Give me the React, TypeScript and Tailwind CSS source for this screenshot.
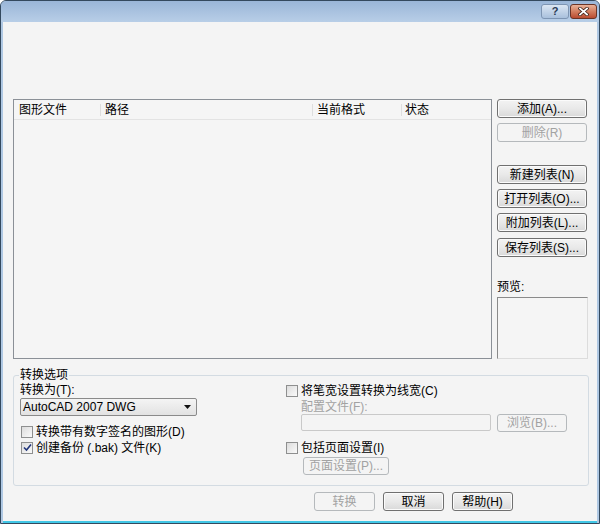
import React from 'react'

const font = { fontFamily: '"Liberation Sans", "Noto Sans CJK SC", sans-serif' }

function Btn({ label, disabled, className = '' }: { label: string; disabled?: boolean; className?: string }) {
  return (
    <div
      className={
        'flex items-center justify-center rounded-[3px] border text-[12px] leading-none ' +
        (disabled
          ? 'border-[#b5b9bc] bg-[#f4f4f4] text-[#a2a2a2] '
          : 'border-[#707070] bg-gradient-to-b from-[#f3f3f3] via-[#e9e9e9] to-[#d9d9d9] text-black shadow-[inset_0_0_0_1px_#fbfbfb] ') +
        className
      }
    >
      {label}
    </div>
  )
}

function Check({ checked, label, className = '' }: { checked?: boolean; label: string; className?: string }) {
  return (
    <div className={'flex h-[15px] items-center gap-[3px] text-[12px] leading-none ' + className}>
      <div className="flex h-[12px] w-[12px] items-center justify-center border border-[#8e8f8f] bg-gradient-to-br from-[#dcdcdc] to-[#fafafa]">
        {checked && (
          <svg width="9" height="9" viewBox="0 0 9 9">
            <path d="M1 4.5 L3.5 7 L8 1.5" fill="none" stroke="#21357a" strokeWidth="1.6" />
          </svg>
        )}
      </div>
      <span>{label}</span>
    </div>
  )
}

export default function App() {
  return (
    <div style={font} className="flex h-[524px] w-[600px] flex-col overflow-hidden rounded-t-[6px] border border-[#34495e] bg-[#afc8e3]">
      {/* title bar */}
      <div className="flex h-[21px] items-start justify-end bg-gradient-to-b from-[#9ab6d8] to-[#b8cee7] pr-[2px] pt-[3px]">
        <div className="flex h-[15px] w-[28px] items-center justify-center rounded-[3px] border border-[#7e95b3] bg-gradient-to-b from-[#dbe6f3] to-[#a9c0dc]">
          <span className="text-[11px] font-bold leading-none text-[#2a3a55]">?</span>
        </div>
        <div className="ml-[1px] flex h-[15px] w-[27px] items-center justify-center rounded-[3px] border border-[#6a3426] bg-gradient-to-b from-[#e9b299] via-[#d27d5f] to-[#b94b30]">
          <svg width="11" height="9" viewBox="0 0 11 9">
            <path d="M2 1.5 L9 7.5 M9 1.5 L2 7.5" stroke="#3c2018" strokeWidth="3.4" strokeLinecap="square" />
            <path d="M2 1.5 L9 7.5 M9 1.5 L2 7.5" stroke="#ffffff" strokeWidth="1.8" strokeLinecap="square" />
          </svg>
        </div>
      </div>

      {/* body */}
      <div className="mx-[2px] flex flex-1 flex-col border-b-[2px] border-[#41c7e6] bg-[#f4f4f4] pl-[10px] pt-[77px] text-black">
        <div className="flex">
          {/* file list */}
          <div className="h-[260px] w-[479px] border border-[#8b9097] bg-[#f5f5f5]">
            <div className="flex h-[20px] items-center border-b border-[#e3e3e3] text-[12px] leading-none">
              <div className="w-[87px] border-r border-[#dedede] pl-[5px]">图形文件</div>
              <div className="w-[212px] border-r border-[#dedede] pl-[4px]">路径</div>
              <div className="w-[89px] border-r border-[#dedede] pl-[4px]">当前格式</div>
              <div className="pl-[3px]">状态</div>
            </div>
          </div>

          {/* right column */}
          <div className="ml-[5px] flex w-[90px] flex-col">
            <Btn label="添加(A)..." className="h-[19px]" />
            <Btn label="删除(R)" disabled className="mt-[5px] h-[19px]" />
            <Btn label="新建列表(N)" className="mt-[23px] h-[19px]" />
            <Btn label="打开列表(O)..." className="mt-[5px] h-[19px]" />
            <Btn label="附加列表(L)..." className="mt-[5px] h-[19px]" />
            <Btn label="保存列表(S)..." className="mt-[6px] h-[19px]" />
            <div className="mt-[24px] h-[13px] text-[12px] leading-[13px]">预览:</div>
            <div className="mt-[3px] h-[62px] w-[91px] border border-b-[#dcdcdc] border-l-[#8a8a8a] border-r-[#dcdcdc] border-t-[#8a8a8a] bg-[#f5f5f5]" />
          </div>
        </div>

        {/* options group */}
        <fieldset className="mt-[9px] h-[118px] w-[576px] rounded-[3px] border border-[#d3dbe2]">
          <legend className="ml-[5px] px-[1px] text-[12px] leading-[14px]">转换选项</legend>
          <div className="flex">
            <div className="flex w-[272px] flex-col pl-[6px]">
              <div className="mt-[1px] h-[14px] text-[12px] leading-[14px]">转换为(T):</div>
              <div className="mt-[1px] flex h-[18px] w-[177px] items-center justify-between rounded-[2px] border border-[#8a8a8a] bg-gradient-to-b from-[#f4f4f4] to-[#e2e2e2] pl-[2px] pr-[5px] text-[12px] leading-none">
                <span>AutoCAD 2007 DWG</span>
                <svg width="7" height="4" viewBox="0 0 7 4">
                  <path d="M0 0 H7 L3.5 4 Z" fill="#111" />
                </svg>
              </div>
              <Check label="转换带有数字签名的图形(D)" className="mt-[8px] pl-[1px]" />
              <Check checked label="创建备份 (.bak) 文件(K)" className="mt-[1px] pl-[1px]" />
            </div>
            <div className="flex flex-col">
              <Check label="将笔宽设置转换为线宽(C)" className="mt-[1px]" />
              <div className="ml-[15px] mt-[3px] h-[13px] text-[12px] leading-[13px] text-[#a2a2a2]">配置文件(F):</div>
              <div className="ml-[15px] flex">
                <div className="h-[17px] w-[190px] rounded-[2px] border border-[#c9c9c9] bg-[#f4f4f4]" />
                <Btn label="浏览(B)..." disabled className="ml-[6px] h-[18px] w-[70px]" />
              </div>
              <Check label="包括页面设置(I)" className="mt-[8px]" />
              <Btn label="页面设置(P)..." disabled className="ml-[17px] mt-[2px] h-[18px] w-[86px]" />
            </div>
          </div>
        </fieldset>

        {/* bottom buttons */}
        <div className="mt-[6px] flex gap-[8px] pl-[301px]">
          <Btn label="转换" disabled className="h-[19px] w-[61px]" />
          <Btn label="取消" className="h-[19px] w-[61px]" />
          <Btn label="帮助(H)" className="h-[19px] w-[61px]" />
        </div>
      </div>
    </div>
  )
}
